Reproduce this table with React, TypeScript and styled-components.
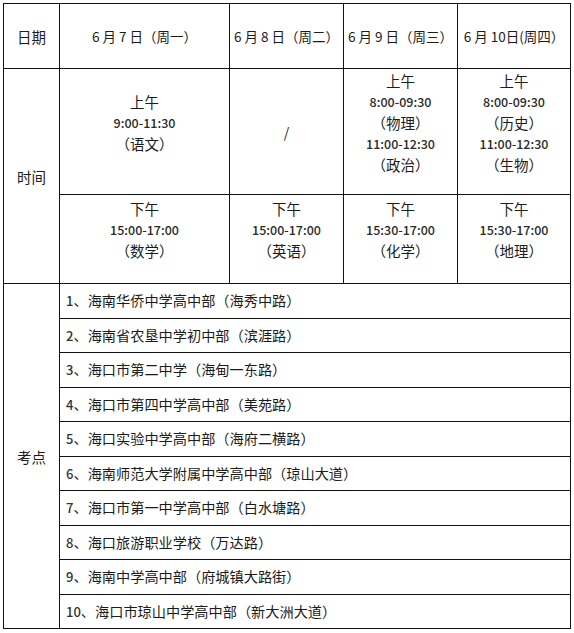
import React from "react";
import styled, { createGlobalStyle } from "styled-components";

const Global = createGlobalStyle`
    html, body {
        margin: 0;
        padding: 0;
        background: #fff;
    }
    body {
        font-family: "Noto Sans CJK SC", "Noto Sans", sans-serif;
        color: #1c1c1c;
    }
`;

type Slot = { title: string; lines: [string, string][] } | null;

const days = [
    { label: "6 月 7 日（周一）", am: { title: "上午", lines: [["9:00-11:30", "（语文）"]] }, pm: { title: "下午", lines: [["15:00-17:00", "（数学）"]] } },
    { label: "6 月 8 日（周二）", am: null, pm: { title: "下午", lines: [["15:00-17:00", "（英语）"]] } },
    {
        label: "6 月 9 日（周三）",
        am: { title: "上午", lines: [["8:00-09:30", "（物理）"], ["11:00-12:30", "（政治）"]] },
        pm: { title: "下午", lines: [["15:30-17:00", "（化学）"]] },
    },
    {
        label: "6 月 10日(周四）",
        am: { title: "上午", lines: [["8:00-09:30", "（历史）"], ["11:00-12:30", "（生物）"]] },
        pm: { title: "下午", lines: [["15:30-17:00", "（地理）"]] },
    },
] as { label: string; am: Slot; pm: Slot }[];

const sites = [
    "海南华侨中学高中部（海秀中路）",
    "海南省农垦中学初中部（滨涯路）",
    "海口市第二中学（海甸一东路）",
    "海口市第四中学高中部（美苑路）",
    "海口实验中学高中部（海府二横路）",
    "海南师范大学附属中学高中部（琼山大道）",
    "海口市第一中学高中部（白水塘路）",
    "海口旅游职业学校（万达路）",
    "海南中学高中部（府城镇大路街）",
    "海口市琼山中学高中部（新大洲大道）",
];

function SlotContent({ slot }: { slot: Slot }) {
    if (!slot) return <Dash>/</Dash>;
    return (
        <>
            <Line>{slot.title}</Line>
            {slot.lines.map(([time, subject]) => (
                <React.Fragment key={time}>
                    <Time>{time}</Time>
                    <Line>{subject}</Line>
                </React.Fragment>
            ))}
        </>
    );
}

export default function App() {
    return (
        <Page>
            <Global />
            <Table>
                <colgroup>
                    <col style={{ width: 56 }} />
                    <col style={{ width: 170 }} />
                    <col style={{ width: 114 }} />
                    <col style={{ width: 114 }} />
                    <col style={{ width: 113 }} />
                </colgroup>
                <tbody>
                    <HeadRow>
                        <LabelCell>日期</LabelCell>
                        {days.map((d) => (
                            <HeadCell key={d.label}>{d.label}</HeadCell>
                        ))}
                    </HeadRow>
                    <AmRow>
                        <LabelCell rowSpan={2}>时间</LabelCell>
                        {days.map((d) => (
                            <SlotCell key={d.label} $empty={!d.am}>
                                <SlotContent slot={d.am} />
                            </SlotCell>
                        ))}
                    </AmRow>
                    <PmRow>
                        {days.map((d) => (
                            <SlotCell key={d.label}>
                                <SlotContent slot={d.pm} />
                            </SlotCell>
                        ))}
                    </PmRow>
                    {sites.map((s, i) => (
                        <SiteRow key={s}>
                            {i === 0 && <LabelCell rowSpan={sites.length}>考点</LabelCell>}
                            <SiteCell colSpan={4}>
                                <Num>{i + 1}</Num>、{s}
                            </SiteCell>
                        </SiteRow>
                    ))}
                </tbody>
            </Table>
        </Page>
    );
}

const Page = styled.div`
    padding: 3px 0 0 3px;
`;

const Table = styled.table`
    border-collapse: collapse;
    table-layout: fixed;
    width: 567px;

    td {
        border: 1px solid #111;
        padding: 0;
        font-size: 14.5px;
        line-height: 21px;
        box-sizing: border-box;
    }
`;

const HeadRow = styled.tr`
    height: 65px;
`;

const AmRow = styled.tr`
    height: 126px;
`;

const PmRow = styled.tr`
    height: 89px;
`;

const SiteRow = styled.tr`
    height: 34.5px;
`;

const LabelCell = styled.td`
    text-align: center;
    vertical-align: middle;
`;

const HeadCell = styled.td`
    text-align: center;
    vertical-align: middle;
    white-space: nowrap;
    && {
        font-size: 13.5px;
    }
`;

const SlotCell = styled.td<{ $empty?: boolean }>`
    text-align: center;
    vertical-align: middle;
    && {
        padding-bottom: ${(p) => (p.$empty ? "0" : "19px")};
    }
`;

const Line = styled.div`
    font-size: 14.5px;
    line-height: 21px;
`;

const Time = styled.div`
    font-size: 12.5px;
    line-height: 21px;
    color: #2a2a2a;
    font-weight: 500;
`;

const Dash = styled.span`
    font-size: 14px;
`;

const SiteCell = styled.td`
    && {
        padding-left: 6px;
        font-size: 14.2px;
    }
    text-align: left;
    vertical-align: middle;
    white-space: nowrap;
`;

const Num = styled.span`
    font-size: 13px;
    color: #333;
    font-weight: 500;
`;
